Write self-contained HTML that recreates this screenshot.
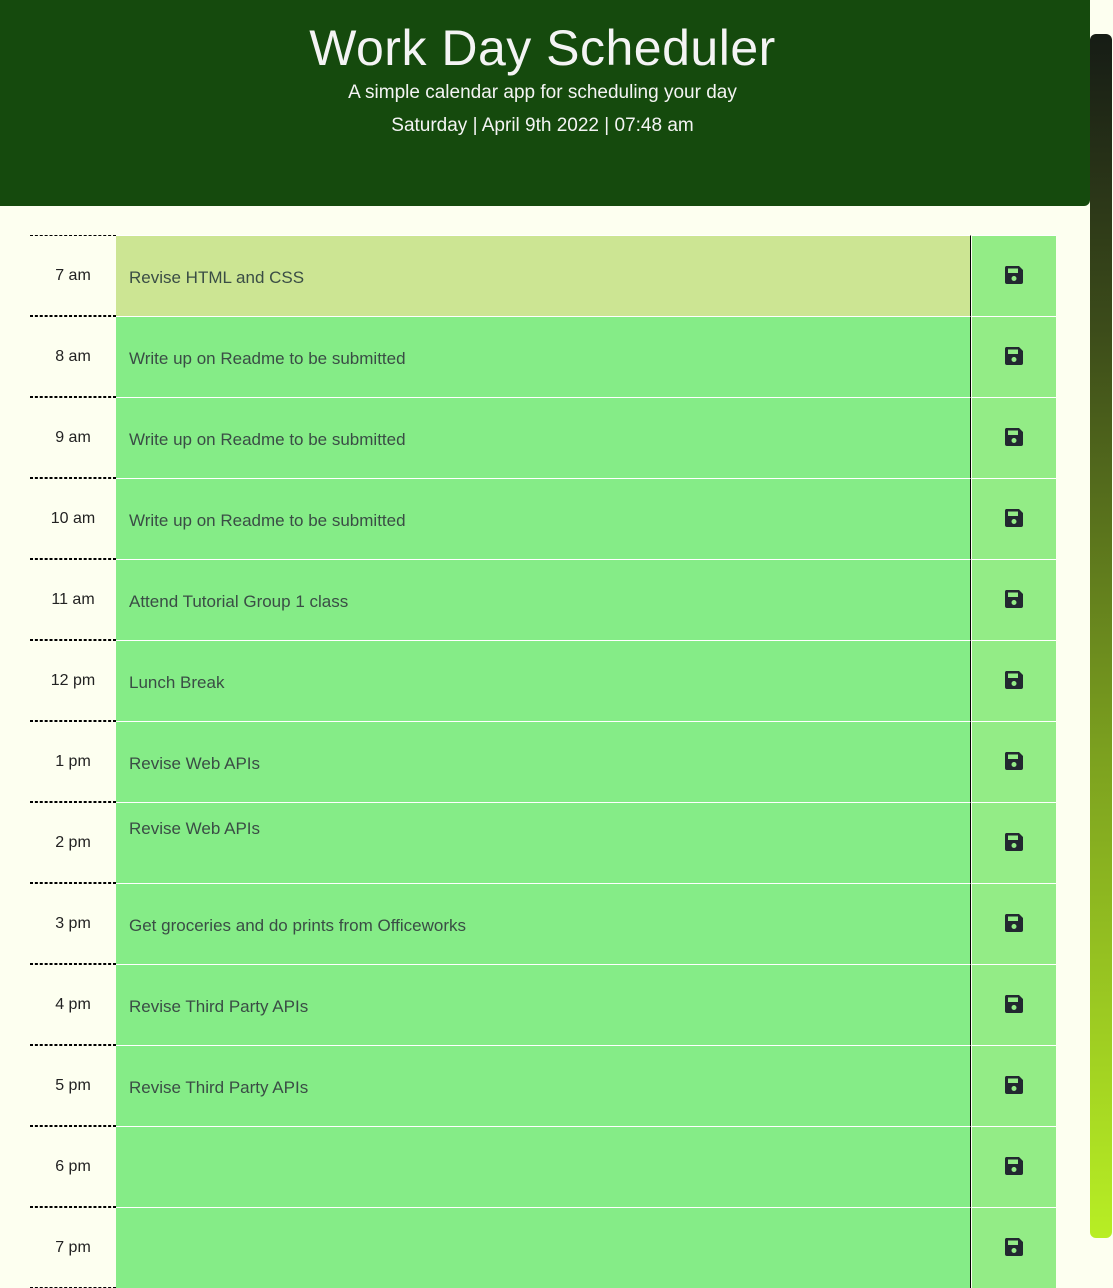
<!DOCTYPE html>
<html><head><style>
*{margin:0;padding:0;box-sizing:border-box}
html,body{width:1113px;height:1288px;overflow:hidden;background:#fdfff0;font-family:"Liberation Sans","DejaVu Sans",sans-serif}
.hdr{position:absolute;left:0;top:0;width:1090px;height:206px;background:#154a0d;border-bottom-right-radius:6px;color:#f4f4f4;text-align:center}
.hdr h1{position:absolute;top:19px;left:0;width:1085px;font-size:50px;font-weight:normal;letter-spacing:0.5px}
.hdr .s{position:absolute;top:82px;left:0;width:1085px;font-size:19px}
.hdr .d{position:absolute;top:115px;left:0;width:1085px;font-size:19px}
.sb{position:absolute;left:1090px;top:34px;width:22px;height:1204px;border-radius:6px;background:linear-gradient(#161c15,#3d4d1a 25%,#7ca11f 60%,#b8ee24)}
.row{position:absolute;left:30px;width:1026px;height:81px}
.hr{position:absolute;left:0;top:0;width:86px;height:81px;border-top:1px dashed #000;border-bottom:1px dashed #000;font-size:16px;color:#222;text-align:center;line-height:80px}
.ta{position:absolute;left:86px;top:0;width:855px;height:81px;background:#85ec87;border-top:1px solid #fff;border-right:1px solid #000;color:#3a4d45;font-size:17px;padding:32px 13px}
.ta.p{background:#cce593}
.ta.t{padding-top:16px}
.sv{position:absolute;left:942px;top:0;width:84px;height:81px;background:#93ec86;border-top:1px solid #fff}
.sv svg{position:absolute;left:32px;top:29px}
</style></head><body>
<div class="hdr"><h1>Work Day Scheduler</h1><div class="s">A simple calendar app for scheduling your day</div><div class="d">Saturday | April 9th 2022 | 07:48 am</div></div>
<div class="sb"></div>
<div class="row" style="top:235px"><div class="hr">7 am</div><div class="ta p">Revise HTML and CSS</div><div class="sv"><svg width="20" height="20" viewBox="0 0 20 20"><path d="M2 1h13l4 4v12a2 2 0 0 1-2 2H3a2 2 0 0 1-2-2V3a2 2 0 0 1 1-2z" fill="#222830"/><rect x="4" y="3.5" width="10" height="4.5" fill="#93ec86"/><circle cx="10" cy="13.5" r="2.5" fill="#93ec86"/></svg></div></div>
<div class="row" style="top:316px"><div class="hr">8 am</div><div class="ta">Write up on Readme to be submitted</div><div class="sv"><svg width="20" height="20" viewBox="0 0 20 20"><path d="M2 1h13l4 4v12a2 2 0 0 1-2 2H3a2 2 0 0 1-2-2V3a2 2 0 0 1 1-2z" fill="#222830"/><rect x="4" y="3.5" width="10" height="4.5" fill="#93ec86"/><circle cx="10" cy="13.5" r="2.5" fill="#93ec86"/></svg></div></div>
<div class="row" style="top:397px"><div class="hr">9 am</div><div class="ta">Write up on Readme to be submitted</div><div class="sv"><svg width="20" height="20" viewBox="0 0 20 20"><path d="M2 1h13l4 4v12a2 2 0 0 1-2 2H3a2 2 0 0 1-2-2V3a2 2 0 0 1 1-2z" fill="#222830"/><rect x="4" y="3.5" width="10" height="4.5" fill="#93ec86"/><circle cx="10" cy="13.5" r="2.5" fill="#93ec86"/></svg></div></div>
<div class="row" style="top:478px"><div class="hr">10 am</div><div class="ta">Write up on Readme to be submitted</div><div class="sv"><svg width="20" height="20" viewBox="0 0 20 20"><path d="M2 1h13l4 4v12a2 2 0 0 1-2 2H3a2 2 0 0 1-2-2V3a2 2 0 0 1 1-2z" fill="#222830"/><rect x="4" y="3.5" width="10" height="4.5" fill="#93ec86"/><circle cx="10" cy="13.5" r="2.5" fill="#93ec86"/></svg></div></div>
<div class="row" style="top:559px"><div class="hr">11 am</div><div class="ta">Attend Tutorial Group 1 class</div><div class="sv"><svg width="20" height="20" viewBox="0 0 20 20"><path d="M2 1h13l4 4v12a2 2 0 0 1-2 2H3a2 2 0 0 1-2-2V3a2 2 0 0 1 1-2z" fill="#222830"/><rect x="4" y="3.5" width="10" height="4.5" fill="#93ec86"/><circle cx="10" cy="13.5" r="2.5" fill="#93ec86"/></svg></div></div>
<div class="row" style="top:640px"><div class="hr">12 pm</div><div class="ta">Lunch Break</div><div class="sv"><svg width="20" height="20" viewBox="0 0 20 20"><path d="M2 1h13l4 4v12a2 2 0 0 1-2 2H3a2 2 0 0 1-2-2V3a2 2 0 0 1 1-2z" fill="#222830"/><rect x="4" y="3.5" width="10" height="4.5" fill="#93ec86"/><circle cx="10" cy="13.5" r="2.5" fill="#93ec86"/></svg></div></div>
<div class="row" style="top:721px"><div class="hr">1 pm</div><div class="ta">Revise Web APIs</div><div class="sv"><svg width="20" height="20" viewBox="0 0 20 20"><path d="M2 1h13l4 4v12a2 2 0 0 1-2 2H3a2 2 0 0 1-2-2V3a2 2 0 0 1 1-2z" fill="#222830"/><rect x="4" y="3.5" width="10" height="4.5" fill="#93ec86"/><circle cx="10" cy="13.5" r="2.5" fill="#93ec86"/></svg></div></div>
<div class="row" style="top:802px"><div class="hr">2 pm</div><div class="ta t">Revise Web APIs</div><div class="sv"><svg width="20" height="20" viewBox="0 0 20 20"><path d="M2 1h13l4 4v12a2 2 0 0 1-2 2H3a2 2 0 0 1-2-2V3a2 2 0 0 1 1-2z" fill="#222830"/><rect x="4" y="3.5" width="10" height="4.5" fill="#93ec86"/><circle cx="10" cy="13.5" r="2.5" fill="#93ec86"/></svg></div></div>
<div class="row" style="top:883px"><div class="hr">3 pm</div><div class="ta">Get groceries and do prints from Officeworks</div><div class="sv"><svg width="20" height="20" viewBox="0 0 20 20"><path d="M2 1h13l4 4v12a2 2 0 0 1-2 2H3a2 2 0 0 1-2-2V3a2 2 0 0 1 1-2z" fill="#222830"/><rect x="4" y="3.5" width="10" height="4.5" fill="#93ec86"/><circle cx="10" cy="13.5" r="2.5" fill="#93ec86"/></svg></div></div>
<div class="row" style="top:964px"><div class="hr">4 pm</div><div class="ta">Revise Third Party APIs</div><div class="sv"><svg width="20" height="20" viewBox="0 0 20 20"><path d="M2 1h13l4 4v12a2 2 0 0 1-2 2H3a2 2 0 0 1-2-2V3a2 2 0 0 1 1-2z" fill="#222830"/><rect x="4" y="3.5" width="10" height="4.5" fill="#93ec86"/><circle cx="10" cy="13.5" r="2.5" fill="#93ec86"/></svg></div></div>
<div class="row" style="top:1045px"><div class="hr">5 pm</div><div class="ta">Revise Third Party APIs</div><div class="sv"><svg width="20" height="20" viewBox="0 0 20 20"><path d="M2 1h13l4 4v12a2 2 0 0 1-2 2H3a2 2 0 0 1-2-2V3a2 2 0 0 1 1-2z" fill="#222830"/><rect x="4" y="3.5" width="10" height="4.5" fill="#93ec86"/><circle cx="10" cy="13.5" r="2.5" fill="#93ec86"/></svg></div></div>
<div class="row" style="top:1126px"><div class="hr">6 pm</div><div class="ta"></div><div class="sv"><svg width="20" height="20" viewBox="0 0 20 20"><path d="M2 1h13l4 4v12a2 2 0 0 1-2 2H3a2 2 0 0 1-2-2V3a2 2 0 0 1 1-2z" fill="#222830"/><rect x="4" y="3.5" width="10" height="4.5" fill="#93ec86"/><circle cx="10" cy="13.5" r="2.5" fill="#93ec86"/></svg></div></div>
<div class="row" style="top:1207px"><div class="hr">7 pm</div><div class="ta"></div><div class="sv"><svg width="20" height="20" viewBox="0 0 20 20"><path d="M2 1h13l4 4v12a2 2 0 0 1-2 2H3a2 2 0 0 1-2-2V3a2 2 0 0 1 1-2z" fill="#222830"/><rect x="4" y="3.5" width="10" height="4.5" fill="#93ec86"/><circle cx="10" cy="13.5" r="2.5" fill="#93ec86"/></svg></div></div>
</body></html>
